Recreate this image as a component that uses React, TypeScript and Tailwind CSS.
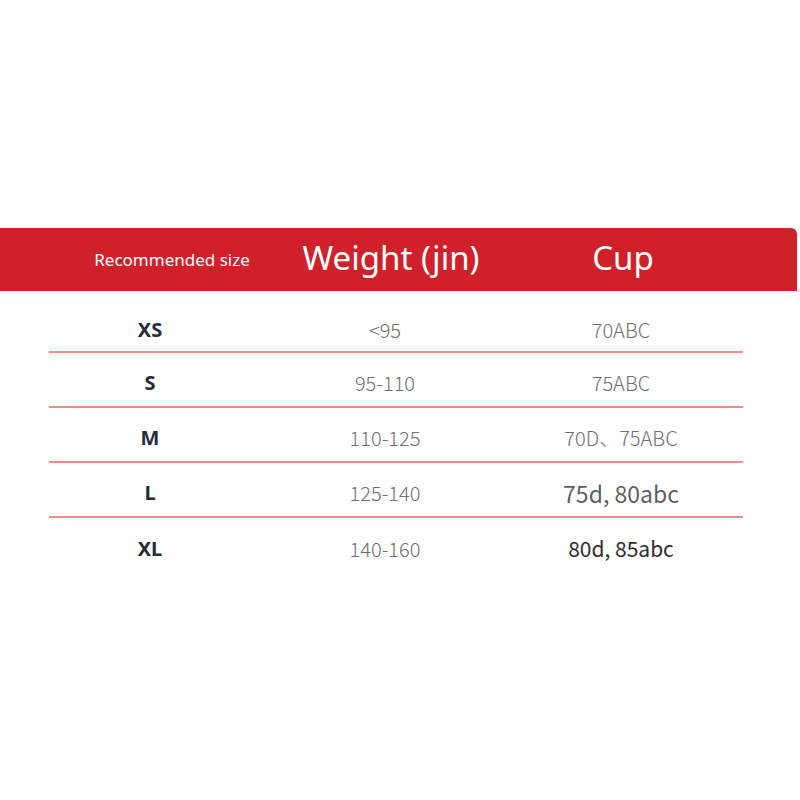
const rows = [
  { size: "XS", weight: "<95", cup: "70ABC", cupCls: "text-[20px] text-[#6f6f6f] font-light" },
  { size: "S", weight: "95-110", cup: "75ABC", cupCls: "text-[20px] text-[#6f6f6f] font-light" },
  { size: "M", weight: "110-125", cup: "70D、75ABC", cupCls: "text-[20px] text-[#6f6f6f] font-light" },
  { size: "L", weight: "125-140", cup: "75d, 80abc", cupCls: "text-[23px] text-[#5f5f5f]" },
  { size: "XL", weight: "140-160", cup: "80d, 85abc", cupCls: "text-[21px] text-[#2e2e2e]" },
];

const font = { fontFamily: '"Noto Sans", "Noto Sans CJK SC", sans-serif' };
const cjk = { fontFamily: '"Noto Sans CJK SC", "Noto Sans", sans-serif' };

export default function App() {
  return (
    <div className="w-[800px] h-[800px] bg-white pt-[228px]" style={font}>
      {/* header band */}
      <div className="w-[797px] h-[63px] bg-[#d0212a] rounded-tr-[6px] flex items-center text-white overflow-hidden">
        <div className="w-[344px] shrink-0 flex justify-center whitespace-nowrap text-[17px]">Recommended size</div>
        <div className="w-[94px] shrink-0 flex justify-center whitespace-nowrap text-[33px] pb-[3px]">
          <span className="shrink-0">Weight (jin)</span>
        </div>
        <div className="w-[370px] shrink-0 flex justify-center whitespace-nowrap text-[33px] pb-[3px]">Cup</div>
      </div>

      <div className="ml-[49px] w-[694px]">
        {rows.map((r, i) => (
          <div
            key={r.size}
            className={
              i === 0
                ? "grid grid-cols-[202px_268px_204px_1fr] items-center h-[62px] pt-[18px] border-b-2 border-[#ee8d8d]"
                : i === rows.length - 1
                ? "grid grid-cols-[202px_268px_204px_1fr] items-center h-[55px] pt-[7px]"
                : "grid grid-cols-[202px_268px_204px_1fr] items-center h-[55px] pt-[7px] border-b-2 border-[#ee8d8d]"
            }
          >
            <div className="flex justify-center text-[20px] font-bold text-[#252d38]">{r.size}</div>
            <div className="flex justify-center text-[20px] font-light text-[#6f6f6f]" style={cjk}>
              {r.weight}
            </div>
            <div className={`flex justify-center whitespace-nowrap ${r.cupCls}`} style={cjk}>
              {r.cup}
            </div>
            <div />
          </div>
        ))}
      </div>
    </div>
  );
}
